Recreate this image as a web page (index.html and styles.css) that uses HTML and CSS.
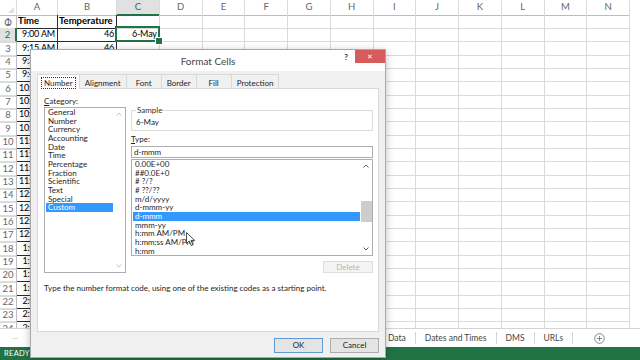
FILE: index.html
```html
<!DOCTYPE html>
<html lang="en">
<head>
    <meta charset="UTF-8">
    <meta name="viewport" content="width=device-width, initial-scale=1.0">
    <title>Format Cells</title>
    <link rel="stylesheet" href="styles.css">
</head>
<body>
    <div class="app">
        <div class="sheet" id="sheet">
            <div class="row head-row" id="headRow">
                <div class="corner"></div>
            </div>
        </div>

        <div class="sheet-tabs">
            <div class="tab-nav">…</div>
            <div class="sheet-tab-list">
                <span class="sheet-tab">Data</span>
                <span class="sheet-tab">Dates and Times</span>
                <span class="sheet-tab">DMS</span>
                <span class="sheet-tab">URLs</span>
                <span class="add-sheet">
                    <svg width="11" height="11" viewBox="0 0 11 11">
                        <circle cx="5.5" cy="5.5" r="4.8" fill="none" stroke="#777" stroke-width="0.9"/>
                        <path d="M5.5 3v5M3 5.5h5" stroke="#777" stroke-width="0.9"/>
                    </svg>
                </span>
            </div>
        </div>

        <div class="status-bar">READY</div>
    </div>

    <div class="dialog">
        <div class="dlg-title">
            <h1>Format Cells</h1>
            <div class="dlg-controls">
                <span class="help">?</span>
                <span class="close">✕</span>
            </div>
        </div>

        <div class="dlg-body">
            <div class="tabs">
                <div class="tab active"><span>Number</span></div>
                <div class="tab">Alignment</div>
                <div class="tab">Font</div>
                <div class="tab">Border</div>
                <div class="tab">Fill</div>
                <div class="tab">Protection</div>
            </div>

            <div class="tab-panel">
                <div class="format-grid">
                    <div class="left-col">
                        <div class="label"><u>C</u>ategory:</div>
                        <div class="listbox cat-list">
                            <div class="list-items">
                                <div class="item">General</div>
                                <div class="item">Number</div>
                                <div class="item">Currency</div>
                                <div class="item">Accounting</div>
                                <div class="item">Date</div>
                                <div class="item">Time</div>
                                <div class="item">Percentage</div>
                                <div class="item">Fraction</div>
                                <div class="item">Scientific</div>
                                <div class="item">Text</div>
                                <div class="item">Special</div>
                                <div class="item selected">Custom</div>
                            </div>
                            <div class="scrollbar disabled">
                                <svg class="arrow" width="6" height="4" viewBox="0 0 6 4"><path d="M0.5 3.5L3 1L5.5 3.5" fill="none" stroke="currentColor"/></svg>
                                <svg class="arrow" width="6" height="4" viewBox="0 0 6 4"><path d="M0.5 0.5L3 3L5.5 0.5" fill="none" stroke="currentColor"/></svg>
                            </div>
                        </div>
                    </div>

                    <div class="right-col">
                        <fieldset class="sample">
                            <legend>Sample</legend>
                            <div>6-May</div>
                        </fieldset>

                        <div class="label type-label"><u>T</u>ype:</div>
                        <div class="type-input">d-mmm</div>

                        <div class="listbox type-list">
                            <div class="list-items">
                                <div class="item">0.00E+00</div>
                                <div class="item">##0.0E+0</div>
                                <div class="item"># ?/?</div>
                                <div class="item"># ??/??</div>
                                <div class="item">m/d/yyyy</div>
                                <div class="item">d-mmm-yy</div>
                                <div class="item selected">d-mmm</div>
                                <div class="item">mmm-yy</div>
                                <div class="item">h:mm AM/PM</div>
                                <div class="item">h:mm:ss AM/PM</div>
                                <div class="item">h:mm</div>
                            </div>
                            <div class="scrollbar">
                                <svg class="arrow" width="6" height="4" viewBox="0 0 6 4"><path d="M0.5 3.5L3 1L5.5 3.5" fill="none" stroke="currentColor"/></svg>
                                <div class="track"><div class="thumb"></div></div>
                                <svg class="arrow" width="6" height="4" viewBox="0 0 6 4"><path d="M0.5 0.5L3 3L5.5 0.5" fill="none" stroke="currentColor"/></svg>
                            </div>
                        </div>

                        <div class="btn-delete">Delete</div>
                    </div>
                </div>

                <p class="hint">Type the number format code, using one of the existing codes as a starting point.</p>
            </div>

            <div class="dlg-buttons">
                <div class="btn default">OK</div>
                <div class="btn">Cancel</div>
            </div>
        </div>
    </div>

    <svg class="cursor" width="10" height="15" viewBox="0 0 10 15">
        <path d="M0.5 0.5L0.5 11.5L3.2 9L5.2 13.6L6.9 12.9L5 8.4L8.6 8.4Z" fill="#fff" stroke="#222" stroke-width="0.8" stroke-linejoin="round"/>
    </svg>

    <script>
        document.addEventListener('DOMContentLoaded', function() {
            const sheet = document.getElementById('sheet');
            const headRow = document.getElementById('headRow');
            const letters = 'ABCDEFGHIJKLMNO';

            // Column headers
            for (const letter of letters) {
                const head = document.createElement('div');
                head.className = 'col-head' + (letter === 'C' ? ' active' : '');
                head.textContent = letter;
                headRow.appendChild(head);
            }

            function formatTime(mins) {
                let h = Math.floor(mins / 60);
                const m = mins % 60;
                const ampm = h >= 12 ? 'PM' : 'AM';
                h = h % 12 || 12;
                return h + ':' + String(m).padStart(2, '0') + ' ' + ampm;
            }

            const temps = [46, 46, 47, 47, 48, 49, 50, 51, 52, 53, 54, 55, 55, 56, 57, 57, 58, 58, 58, 57, 57, 56, 56];

            for (let r = 1; r <= 24; r++) {
                const row = document.createElement('div');
                row.className = 'row';

                const rowHead = document.createElement('div');
                rowHead.className = 'row-head' + (r === 2 ? ' active' : '');
                rowHead.textContent = r;
                row.appendChild(rowHead);

                for (let c = 0; c < letters.length; c++) {
                    const cell = document.createElement('div');
                    cell.className = 'cell';

                    if (c < 2) cell.classList.add('boxed');

                    if (r === 1 && c === 0) {
                        cell.textContent = 'Time';
                        cell.classList.add('head-cell');
                    } else if (r === 1 && c === 1) {
                        cell.textContent = 'Temperature';
                        cell.classList.add('head-cell');
                    } else if (c === 0) {
                        cell.textContent = formatTime(540 + (r - 2) * 15);
                    } else if (c === 1) {
                        cell.textContent = temps[r - 2];
                    } else if (c === 2 && r === 2) {
                        cell.textContent = '6-May';
                        cell.classList.add('selected');
                    }

                    row.appendChild(cell);
                }

                sheet.appendChild(row);
            }
        });
    </script>
</body>
</html>
```

FILE: styles.css
```css
* {
    box-sizing: border-box;
}

body {
    font-family: Lato, 'Open Sans', sans-serif;
    margin: 0;
    width: 640px;
    height: 360px;
    overflow: hidden;
    position: relative;
    background-color: #fff;
}

.app {
    display: flex;
    flex-direction: column;
    height: 360px;
}

/* Spreadsheet grid */

.sheet {
    height: 328px;
    overflow: hidden;
}

.row {
    display: grid;
    grid-template-columns: 17px 41px 59px repeat(12, 42.75px);
    height: 13.333px;
}

.head-row {
    height: 15px;
}

.corner {
    border-right: 1px solid #dcdcdc;
    border-bottom: 1px solid #bdbdbd;
    position: relative;
}

    .corner::after {
        content: '';
        position: absolute;
        right: 2px;
        bottom: 2px;
        border-left: 6px solid transparent;
        border-bottom: 6px solid #dfdfdf;
    }

.col-head {
    border-right: 1px solid #dcdcdc;
    border-bottom: 1px solid #bdbdbd;
    color: #666;
    font-size: 9.5px;
    line-height: 14px;
    text-align: center;
}

    .col-head.active {
        background-color: #e1e1e1;
        color: #217346;
        border-bottom: 2px solid #217346;
    }

.row-head {
    border-right: 1px solid #bdbdbd;
    border-bottom: 1px solid #dcdcdc;
    color: #666;
    font-size: 9.5px;
    line-height: 13px;
    text-align: center;
}

    .row-head.active {
        background-color: #e1e1e1;
        color: #217346;
        border-right: 2px solid #217346;
    }

.cell {
    border-right: 1px solid #dadada;
    border-bottom: 1px solid #dadada;
    font-size: 9px;
    letter-spacing: -0.2px;
    line-height: 12.5px;
    padding: 0 2px;
    text-align: right;
    white-space: nowrap;
    overflow: hidden;
    color: #000;
}

    .cell.boxed {
        border-color: #2b2b2b;
    }

    .cell.head-cell {
        font-size: 9.5px;
        letter-spacing: 0;
        font-weight: 700;
        text-align: left;
        padding-left: 1px;
    }

    .cell.selected {
        position: relative;
        overflow: visible;
    }

        .cell.selected::after {
            content: '';
            position: absolute;
            left: -2px;
            top: -2px;
            right: -1px;
            bottom: -1px;
            border: 2px solid #217346;
        }

        .cell.selected::before {
            content: '';
            position: absolute;
            right: -4px;
            bottom: -4px;
            width: 6px;
            height: 6px;
            background-color: #217346;
            border: 1px solid #fff;
            z-index: 1;
        }

/* Sheet tabs and status bar */

.sheet-tabs {
    height: 19px;
    border-top: 1px solid #d4d4d4;
    display: flex;
    font-size: 8.5px;
    color: #444;
}

.tab-nav {
    width: 30px;
    text-align: center;
    color: #b0b0b0;
    font-size: 7px;
    line-height: 15px;
}

.sheet-tab-list {
    display: flex;
    align-items: center;
    padding-left: 346px;
}

.sheet-tab {
    padding: 0 9px;
    border-right: 1px solid #d4d4d4;
    line-height: 12px;
}

    .sheet-tab:first-child {
        padding-left: 12px;
    }

.add-sheet {
    margin-left: 21px;
    height: 11px;
}

.status-bar {
    height: 13px;
    background-color: #217346;
    color: #fff;
    font-size: 7.5px;
    line-height: 13px;
    padding-left: 4px;
    letter-spacing: 0.3px;
}

/* Format Cells dialog */

.dialog {
    position: absolute;
    left: 30px;
    top: 49px;
    width: 356px;
    height: 309px;
    border: 1px solid #a8a8a8;
    background-color: #f0f0f0;
    box-shadow: 0 2px 8px rgba(0, 0, 0, 0.25);
    display: flex;
    flex-direction: column;
    font-size: 8px;
    color: #1e1e1e;
}

.dlg-title {
    height: 21px;
    background-color: #fff;
    display: grid;
    grid-template-columns: 1fr auto 1fr;
}

    .dlg-title h1 {
        grid-column: 2;
        margin: 0;
        font-size: 10px;
        font-weight: 400;
        color: #444;
        line-height: 23px;
    }

.dlg-controls {
    justify-self: end;
    display: flex;
    align-items: flex-start;
}

.help {
    font-weight: 700;
    color: #333;
    line-height: 14px;
    margin-right: 7px;
}

.close {
    width: 30px;
    height: 13px;
    background-color: #d65b5b;
    color: #fff;
    font-size: 7px;
    line-height: 13px;
    text-align: center;
}

.dlg-body {
    flex: 1;
    padding: 3px 6px 0 6px;
}

.tabs {
    display: flex;
    height: 14px;
}

.tab {
    min-width: 36px;
    height: 14px;
    padding: 3px 5px 0;
    border: 1px solid #d9d9d9;
    border-bottom: none;
    margin-right: -1px;
    line-height: 10px;
    text-align: center;
}

    .tab.active {
        background-color: #fff;
        padding: 2px 3px 0;
        height: 15px;
        position: relative;
        z-index: 1;
    }

        .tab.active span {
            display: inline-block;
            border: 1px dotted #333;
            padding: 0 2px;
            line-height: 10px;
        }

.tab-panel {
    background-color: #fff;
    border: 1px solid #d9d9d9;
    height: 244px;
    padding: 8px 5px 0 6px;
}

.format-grid {
    display: grid;
    grid-template-columns: 82px 1fr;
    column-gap: 5px;
}

.label {
    line-height: 9px;
    margin-bottom: 1px;
}

.listbox {
    display: flex;
    border: 1px solid #abadb3;
    background-color: #fff;
}

.cat-list {
    height: 166px;
}

.list-items {
    flex: 1;
    padding-left: 1px;
}

.item {
    line-height: 8.66px;
    height: 8.66px;
    padding-left: 2px;
    white-space: nowrap;
}

    .item.selected {
        background-color: #3399ff;
        color: #fff;
    }

.scrollbar {
    width: 12px;
    display: flex;
    flex-direction: column;
    justify-content: space-between;
    align-items: center;
    padding: 4px 0;
    color: #606060;
}

    .scrollbar.disabled {
        color: #c4c4c4;
    }

.arrow {
    display: block;
}

.track {
    flex: 1;
    width: 11px;
    margin: 3px 0;
}

.thumb {
    margin-top: 30px;
    height: 21px;
    background-color: #cdcdcd;
}

.right-col {
    display: flex;
    flex-direction: column;
}

.sample {
    margin: 9px 0 0;
    padding: 3px 4px;
    border: 1px solid #dcdcdc;
    line-height: 9px;
    min-inline-size: 0;
}

    .sample legend {
        padding: 0 1px;
        line-height: 9px;
        color: #333;
    }

.type-label {
    margin-top: 4px;
    margin-bottom: 0;
}

.type-input {
    margin-top: 2px;
    height: 12px;
    border: 1px solid #abadb3;
    padding-left: 2px;
    line-height: 10px;
    background-color: #fff;
}

.type-list {
    margin-top: 1px;
    height: 97px;
}

    .type-list .list-items {
        padding-left: 1px;
    }

.btn-delete {
    margin-top: 5px;
    margin-left: auto;
    width: 50px;
    height: 12px;
    border: 1px solid #dedede;
    background-color: #f4f4f4;
    color: #b4b4b4;
    line-height: 10px;
    text-align: center;
}

.hint {
    margin: 11px 0 0;
    line-height: 9px;
}

.dlg-buttons {
    display: flex;
    justify-content: flex-end;
    gap: 7px;
    margin-top: 6px;
}

.btn {
    width: 49px;
    height: 15px;
    border: 1px solid #adadad;
    background-color: #e4e4e4;
    line-height: 13px;
    text-align: center;
}

    .btn.default {
        border-color: #5e9bd6;
    }

.cursor {
    position: absolute;
    left: 186px;
    top: 232px;
}
```
